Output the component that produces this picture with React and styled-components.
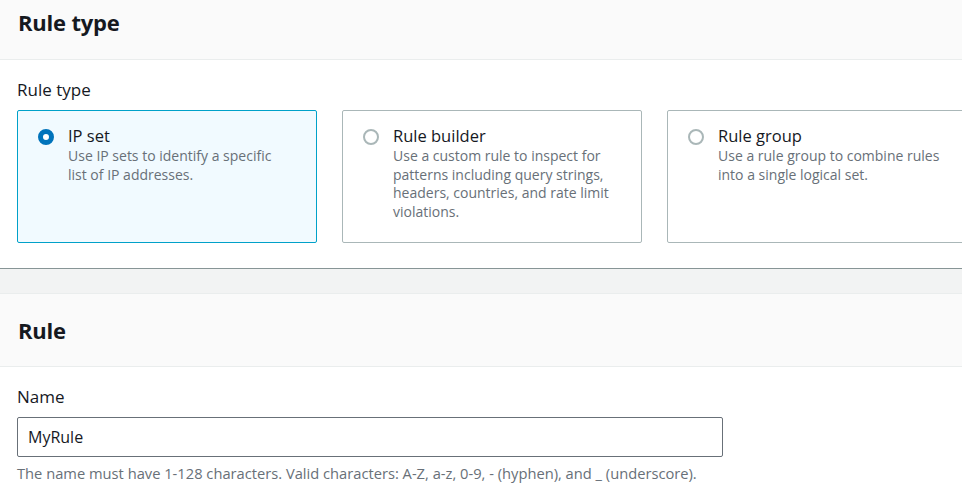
import React, { useState } from 'react';
import styled, { createGlobalStyle } from 'styled-components';

const GlobalStyle = createGlobalStyle`
  html, body {
    margin: 0;
    padding: 0;
    background: #ffffff;
    overflow: hidden;
  }
  body {
    font-family: "Open Sans", "Liberation Sans", sans-serif;
    color: #16191f;
  }
`;

const Page = styled.div`
  width: 962px;
  overflow: hidden;
  background: #f2f3f3;
`;

const Panel = styled.section`
  background: #ffffff;
  border-top: ${(p) => (p.$first ? 'none' : '1px solid #eaeded')};
  border-bottom: 1px solid #879596;
  margin-bottom: ${(p) => (p.$first ? '24px' : '0')};
`;

const PanelHeader = styled.div`
  background: #fafafa;
  border-bottom: 1px solid #eaeded;
  height: ${(p) => p.$height}px;
  display: flex;
  align-items: center;
  padding-left: 18px;
`;

const PanelTitle = styled.h2`
  margin: 0;
  font-size: 22px;
  font-weight: 700;
  color: #16191f;
  letter-spacing: -0.2px;
  position: relative;
  top: ${(p) => p.$shift || 0}px;
`;

const PanelBody = styled.div`
  padding: ${(p) => p.$padding};
`;

const FieldLabel = styled.div`
  font-size: 17px;
  line-height: 22px;
  color: #16191f;
  margin-bottom: ${(p) => p.$gap || 9}px;
`;

const CardRow = styled.div`
  display: grid;
  grid-template-columns: repeat(3, 300px);
  column-gap: 25px;
  width: 960px;
`;

const Card = styled.label`
  box-sizing: border-box;
  height: 133px;
  border: 1px solid ${(p) => (p.$selected ? '#00a1c9' : '#aab7b8')};
  background: ${(p) => (p.$selected ? '#f1faff' : '#ffffff')};
  border-radius: 2px;
  padding: 14px 24px 14px 20px;
  display: flex;
  gap: 14px;
  cursor: pointer;
`;

const Radio = styled.span`
  box-sizing: border-box;
  flex: 0 0 16px;
  width: 16px;
  height: 16px;
  margin-top: 4px;
  border-radius: 50%;
  border: ${(p) => (p.$checked ? '5px solid #0073bb' : '2px solid #aab7b8')};
  background: #ffffff;
`;

const CardText = styled.div`
  display: flex;
  flex-direction: column;
  width: 224px;
`;

const CardTitle = styled.span`
  font-size: 16.5px;
  line-height: 22px;
  color: #16191f;
`;

const CardDesc = styled.span`
  font-size: 14px;
  line-height: 18.7px;
  color: #687078;
`;

const TextInput = styled.input`
  box-sizing: border-box;
  width: 706px;
  height: 40px;
  border: 1px solid #687078;
  border-radius: 2px;
  padding: 0 10px;
  font-family: inherit;
  font-size: 16px;
  color: #16191f;
  outline: none;
`;

const Hint = styled.div`
  font-size: 14.7px;
  line-height: 18px;
  color: #687078;
  margin-top: 7px;
`;

const ruleTypes = [
  {
    id: 'ipset',
    title: 'IP set',
    desc: 'Use IP sets to identify a specific list of IP addresses.',
  },
  {
    id: 'builder',
    title: 'Rule builder',
    desc: 'Use a custom rule to inspect for patterns including query strings, headers, countries, and rate limit violations.',
  },
  {
    id: 'group',
    title: 'Rule group',
    desc: 'Use a rule group to combine rules into a single logical set.',
  },
];

export default function App() {
  const [type, setType] = useState('ipset');
  const [name, setName] = useState('MyRule');

  return (
    <Page>
      <GlobalStyle />

      <Panel $first>
        <PanelHeader $height={59}>
          <PanelTitle $shift={-8}>Rule type</PanelTitle>
        </PanelHeader>
        <PanelBody $padding="19px 0 25px 17px">
          <FieldLabel $gap={9}>Rule type</FieldLabel>
          <CardRow>
            {ruleTypes.map((r) => (
              <Card key={r.id} $selected={type === r.id} onClick={() => setType(r.id)}>
                <Radio $checked={type === r.id} />
                <CardText>
                  <CardTitle>{r.title}</CardTitle>
                  <CardDesc>{r.desc}</CardDesc>
                </CardText>
              </Card>
            ))}
          </CardRow>
        </PanelBody>
      </Panel>

      <Panel>
        <PanelHeader $height={72}>
          <PanelTitle>Rule</PanelTitle>
        </PanelHeader>
        <PanelBody $padding="19px 0 40px 17px">
          <FieldLabel $gap={9}>Name</FieldLabel>
          <TextInput value={name} onChange={(e) => setName(e.target.value)} />
          <Hint>
            The name must have 1-128 characters. Valid characters: A-Z, a-z, 0-9, - (hyphen), and _ (underscore).
          </Hint>
        </PanelBody>
      </Panel>
    </Page>
  );
}
